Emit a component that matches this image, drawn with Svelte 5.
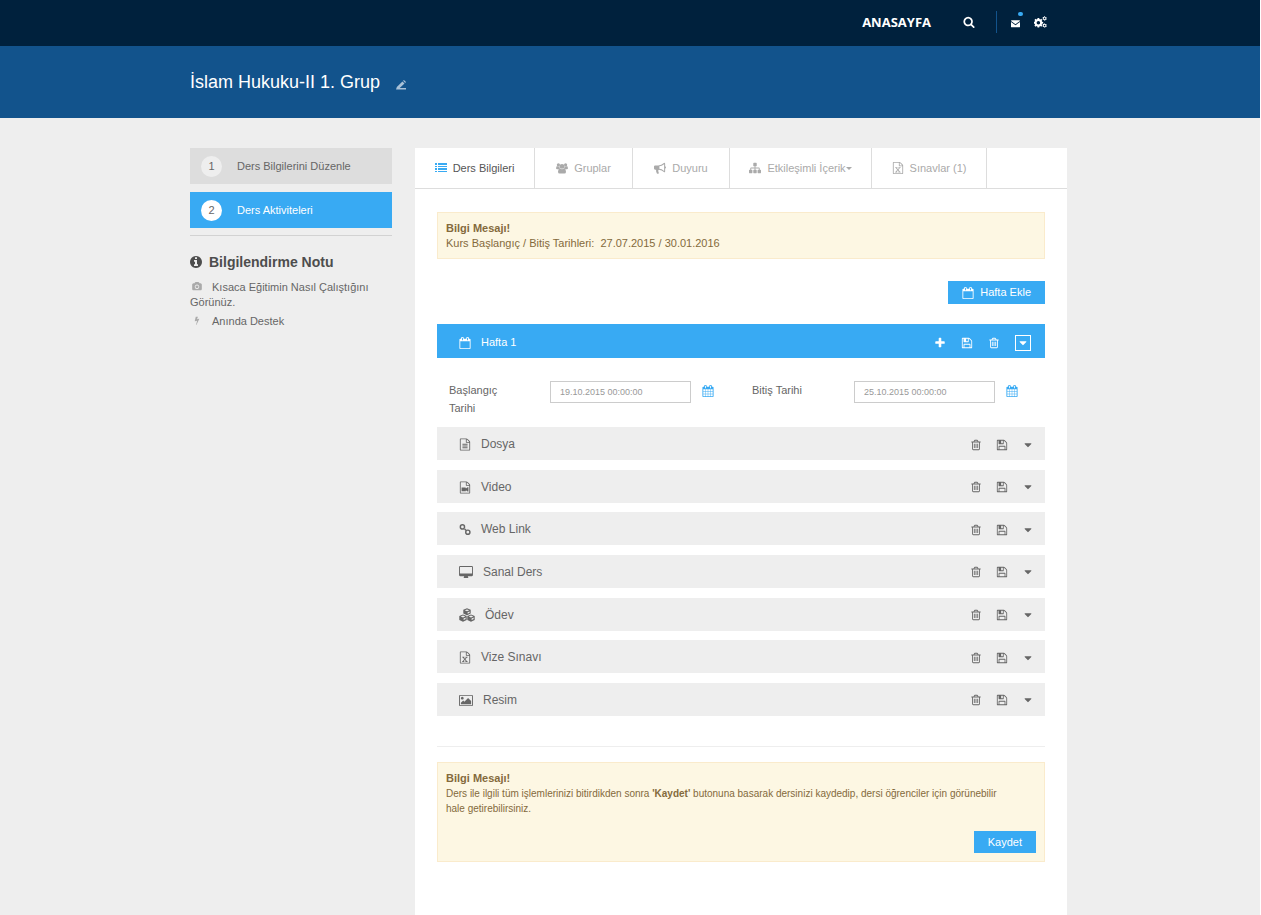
<script lang="ts">
    /* menu data */
    const tabs = [
        { icon: 'list', label: 'Ders Bilgileri' },
        { icon: 'users', label: 'Gruplar' },
        { icon: 'bullhorn', label: 'Duyuru' },
        { icon: 'sitemap', label: 'Etkileşimli İçerik', menu: true },
        { icon: 'excel', label: 'Sınavlar (1)' },
    ];

    const steps = ['Ders Bilgilerini Düzenle', 'Ders Aktiviteleri'];

    const activities = [
        { icon: 'text', label: 'Dosya', size: 12 },
        { icon: 'video', label: 'Video', size: 12 },
        { icon: 'link', label: 'Web Link', size: 12 },
        { icon: 'desktop', label: 'Sanal Ders', size: 14 },
        { icon: 'cubes', label: 'Ödev', size: 16 },
        { icon: 'excel', label: 'Vize Sınavı', size: 12 },
        { icon: 'image', label: 'Resim', size: 14 },
    ];

    /* icon shapes */
    const page = 'M1596 380q28 28 48 76t20 88v1152q0 40-28 68t-68 28h-1344q-40 0-68-28t-28-68v-1600q0-40 28-68t68-28h896q40 0 88 20t76 48zm-444-244v376h376q-10-29-22-41l-313-313q-12-12-41-22zm384 1528v-1024h-416q-40 0-68-28t-28-68v-416h-768v1536h1280z';
    const calendarFrame = 'M576 448v-288q0-13-9.5-22.5t-22.5-9.5h-64q-13 0-22.5 9.5t-9.5 22.5v288q0 13 9.5 22.5t22.5 9.5h64q13 0 22.5-9.5t9.5-22.5zm768 0v-288q0-13-9.5-22.5t-22.5-9.5h-64q-13 0-22.5 9.5t-9.5 22.5v288q0 13 9.5 22.5t22.5 9.5h64q13 0 22.5-9.5t9.5-22.5zm384-64v1280q0 52-38 90t-90 38h-1408q-52 0-90-38t-38-90v-1280q0-52 38-90t90-38h128v-96q0-66 47-113t113-47h64q66 0 113 47t47 113v96h384v-96q0-66 47-113t113-47h64q66 0 113 47t47 113v96h128q52 0 90 38t38 90z';

    const shapes: Record<string, { box?: string; d: string }> = {
        search: { d: 'M1216 832q0-185-131.5-316.5t-316.5-131.5-316.5 131.5-131.5 316.5 131.5 316.5 316.5 131.5 316.5-131.5 131.5-316.5zm512 832q0 52-38 90t-90 38q-54 0-90-38l-343-342q-179 124-399 124-143 0-273.5-55.5t-225-150-150-225-55.5-273.5 55.5-273.5 150-225 225-150 273.5-55.5 273.5 55.5 225 150 150 225 55.5 273.5q0 220-124 399l343 343q37 37 37 90z' },
        mail: { box: '0 0 14 14', d: 'M1 2h12q1 0 1 1L7 8 0 3q0-1 1-1zM0 4.800l7 4.800 7-4.800V12q0 1-1 1H1q-1 0-1-1z' },
        cogs: { box: '0 0 16 14', d: 'M4.400 2h2l.3 1.400 1 .4 1.200-.8 1.400 1.400-.8 1.200.4 1 1.400.3v2l-1.400.3-.4 1 .8 1.200L8.900 12.800l-1.200-.8-1 .4-.3 1.400h-2l-.3-1.400-1-.4-1.200.8L.5 11.400l.8-1.200-.4-1-1.400-.3v-2l1.400-.3.4-1-.8-1.200L1.900 3l1.200.8 1-.4zM5.400 5.700a2.200 2.200 0 1 0 0 4.400 2.200 2.200 0 0 0 0-4.400zM12.500 0h1l.4 1 1-.2.7.9-.6.8.7.7-.6 1-.9-.1-.5 1h-1.200l-.4-1-1 .1-.6-1 .6-.8-.6-.7.6-1 1 .1zM13 1.600a1 1 0 1 0 0 2 1 1 0 0 0 0-2zM12.500 8.800h1l.4 1 1-.2.7.9-.6.8.7.7-.6 1-.9-.1-.5 1h-1.200l-.4-1-1 .1-.6-1 .6-.8-.6-.7.6-1 1 .1zM13 10.400a1 1 0 1 0 0 2 1 1 0 0 0 0-2z' },
        pencil: { box: '0 0 12 12', d: 'M1 8.500 7.700 1.800 10.200 4.300 4.500 9.500H12V11.500H0zM8.500 1l1-1 2.500 2.500-1 1z' },
        info: { box: '128 128 1536 1536', d: 'M1152 1376v-160q0-14-9-23t-23-9h-96v-512q0-14-9-23t-23-9h-320q-14 0-23 9t-9 23v160q0 14 9 23t23 9h96v320h-96q-14 0-23 9t-9 23v160q0 14 9 23t23 9h448q14 0 23-9t9-23zm-128-896v-160q0-14-9-23t-23-9h-192q-14 0-23 9t-9 23v160q0 14 9 23t23 9h192q14 0 23-9t9-23zm640 416q0 209-103 385.5t-279.5 279.5-385.5 103-385.5-103-279.5-279.5-103-385.5 103-385.5 279.5-279.5 385.5-103 385.5 103 279.5 279.5 103 385.5z' },
        camera: { box: '-64 0 1920 1792', d: 'M896 672q119 0 203.5 84.5t84.5 203.5-84.5 203.5-203.5 84.5-203.5-84.5-84.5-203.5 84.5-203.5 203.5-84.5zm704-416q106 0 181 75t75 181v896q0 106-75 181t-181 75h-1408q-106 0-181-75t-75-181v-896q0-106 75-181t181-75h224l51-136q19-49 69.5-84.5t103.5-35.5h512q53 0 103.5 35.5t69.5 84.5l51 136h224zm-704 1152q185 0 316.5-131.5t131.5-316.5-131.5-316.5-316.5-131.5-316.5 131.5-131.5 316.5 131.5 316.5 316.5 131.5z' },
        bolt: { d: 'M1333 566q18 20 7 44l-540 1157q-13 25-42 25-4 0-14-2-17-5-25.5-19t-4.5-30l197-808-406 101q-4 1-12 1-18 0-31-11-18-15-13-39l201-825q4-14 16-23t28-9h328q19 0 32 12.5t13 29.5q0 8-5 18l-171 463 396-98q8-2 12-2 19 0 34 15z' },
        list: { box: '0 0 12 12', d: 'M0 1h2v2H0zM3 1h9v2H3zM0 4h2v1H0zM3 4h9v1H3zM0 6h2v2H0zM3 6h9v2H3zM0 9h2v1H0zM3 9h9v1H3z' },
        users: { box: '0 0 15 14', d: 'M3 1a2 2 0 1 1 0 4 2 2 0 0 1 0-4zM12 1a2 2 0 1 1 0 4 2 2 0 0 1 0-4zM7.500 2a3 3 0 1 1 0 6 3 3 0 0 1 0-6zM1 4.500l2 1 1.300-.5q0 1.600 1 2.500Q4 7.600 3.200 8.500H1.500Q0 8.500 0 7zM14 4.500l-2 1-1.300-.5q0 1.600-1 2.500 1.300.1 2.100 1h1.700Q15 8.500 15 7zM5 7.700q2.500 1.500 5 0 2.500.3 2.500 4Q12.500 14 10.500 14h-6q-2 0-2-2.300 0-3.700 2.500-4z' },
        bullhorn: { box: '0 0 14 14', d: 'M13 5q1 .3 1 1.300T13 7.600V11q0 1-1 1-3-2.700-6.200-3-1.300.6-.7 1.700-.4 1 .9 2.100-.8 1.200-2.600.6-1.200-2-1-4.400H1.300Q0 9 0 7.700V5.300Q0 4 1.300 4H5q3.400 0 7-3 1 0 1 1zm-1.200-2.500Q9 4.700 6.300 5v3Q9 8.200 11.800 10.500z' },
        sitemap: { d: 'M1792 1248v320q0 40-28 68t-68 28h-320q-40 0-68-28t-28-68v-320q0-40 28-68t68-28h96v-192h-512v192h96q40 0 68 28t28 68v320q0 40-28 68t-68 28h-320q-40 0-68-28t-28-68v-320q0-40 28-68t68-28h96v-192h-512v192h96q40 0 68 28t28 68v320q0 40-28 68t-68 28h-320q-40 0-68-28t-28-68v-320q0-40 28-68t68-28h96v-192q0-52 38-90t90-38h512v-192h-96q-40 0-68-28t-28-68v-320q0-40 28-68t68-28h320q40 0 68 28t28 68v320q0 40-28 68t-68 28h-96v192h512q52 0 90 38t38 90v192h96q40 0 68 28t28 68z' },
        text: { d: page + 'M512 800h768v128h-768zM512 1056h768v128h-768zM512 1312h768v128h-768z' },
        video: { d: page + 'M384 896h576q64 0 64 64v96l256-192h128v640h-128l-256-192v96q0 64-64 64h-576z' },
        excel: { d: page + 'M480 768h330v110h-70l145 200 145-200h-70v-110h330v110h-100l-220 280 230 290h90v110h-350v-110h80l-150-200-150 200h80v110h-340v-110h90l230-290-220-280h-80z' },
        link: { box: '0 0 14 14', d: 'M4 .7a3.300 3.300 0 1 1 0 6.600 3.300 3.300 0 0 1 0-6.600zM4 2.400a1.600 1.600 0 1 0 0 3.200 1.600 1.600 0 0 0 0-3.200zM10.300 6.900a3.300 3.300 0 1 1 0 6.600 3.300 3.300 0 0 1 0-6.600zM10.300 8.600a1.600 1.600 0 1 0 0 3.200 1.600 1.600 0 0 0 0-3.200zM6.900 5.500 8.700 7.300 7.400 8.600 5.600 6.800z' },
        desktop: { box: '-64 0 1920 1792', d: 'M1728 992v-832q0-13-9.5-22.5t-22.5-9.5h-1600q-13 0-22.5 9.5t-9.5 22.5v832q0 13 9.5 22.5t22.5 9.5h1600q13 0 22.5-9.5t9.5-22.5zm128-832v1088q0 66-47 113t-113 47h-544q0 37 16 77.5t32 71 16 43.5q0 26-19 45t-45 19h-512q-26 0-45-19t-19-45q0-14 16-44t32-70 16-78h-544q-66 0-113-47t-47-113v-1088q0-66 47-113t113-47h1600q66 0 113 47t47 113z' },
        cubes: { box: '0 0 16 14', d: 'M8 .3l3.700 1.500v3.700L8 7.200 4.300 5.500V1.800zM8 1.400 5.700 2.300 8 3.300l2.300-1zM8.600 4.300v1.500l2-1V3.400zM4 6.500l3.700 1.500v3.900L4 13.700.3 11.900V8zM4 7.600 1.700 8.500 4 9.500l2.300-1zM4.600 10.500V12l2-1V9.600zM12 6.500l3.700 1.500v3.900L12 13.700l-3.700-1.800V8zM12 7.600l-2.300.9 2.300 1 2.300-1zM12.600 10.500V12l2-1V9.600z' },
        image: { box: '-64 0 1920 1792', d: 'M576 576q0 80-56 136t-136 56-136-56-56-136 56-136 136-56 136 56 56 136zm1024 384v448h-1408v-192l320-320 160 160 512-512zm96-704h-1600q-13 0-22.5 9.5t-9.5 22.5v1216q0 13 9.5 22.5t22.5 9.5h1600q13 0 22.5-9.5t9.5-22.5v-1216q0-13-9.5-22.5t-22.5-9.5zm160 32v1216q0 66-47 113t-113 47h-1600q-66 0-113-47t-47-113v-1216q0-66 47-113t113-47h1600q66 0 113 47t47 113z' },
        plus: { d: 'M1600 736v192q0 40-28 68t-68 28h-416v416q0 40-28 68t-68 28h-192q-40 0-68-28t-28-68v-416h-416q-40 0-68-28t-28-68v-192q0-40 28-68t68-28h416v-416q0-40 28-68t68-28h192q40 0 68 28t28 68v416h416q40 0 68 28t28 68z' },
        save: { d: 'M512 1536h768v-384h-768v384zm896 0h128v-896q0-14-10-38.5t-20-34.5l-281-281q-10-10-34-20t-39-10v416q0 40-28 68t-68 28h-576q-40 0-68-28t-28-68v-416h-128v1280h128v-416q0-40 28-68t68-28h832q40 0 68 28t28 68v416zm-384-928v-320q0-13-9.5-22.5t-22.5-9.5h-192q-13 0-22.5 9.5t-9.5 22.5v320q0 13 9.5 22.5t22.5 9.5h192q13 0 22.5-9.5t9.5-22.5zm640 32v928q0 40-28 68t-68 28h-1344q-40 0-68-28t-28-68v-1344q0-40 28-68t68-28h928q40 0 88 20t76 48l280 280q28 28 48 76t20 88z' },
        trash: { d: 'M704 736v576q0 14-9 23t-23 9h-64q-14 0-23-9t-9-23v-576q0-14 9-23t23-9h64q14 0 23 9t9 23zm256 0v576q0 14-9 23t-23 9h-64q-14 0-23-9t-9-23v-576q0-14 9-23t23-9h64q14 0 23 9t9 23zm256 0v576q0 14-9 23t-23 9h-64q-14 0-23-9t-9-23v-576q0-14 9-23t23-9h64q14 0 23 9t9 23zm128 724v-948h-896v948q0 22 7 40.5t14.5 27 10.5 8.5h832q3 0 10.5-8.5t14.5-27 7-40.5zm-672-1076h448l-48-117q-7-9-17-11h-317q-10 2-17 11zm928 32v64q0 14-9 23t-23 9h-96v948q0 83-47 143.5t-113 60.5h-832q-66 0-113-58.5t-47-141.5v-952h-96q-14 0-23-9t-9-23v-64q0-14 9-23t23-9h309l70-167q15-37 54-63t79-26h320q40 0 79 26t54 63l70 167h309q14 0 23 9t9 23z' },
        caret: { d: 'M1408 704q0 26-19 45l-448 448q-19 19-45 19t-45-19l-448-448q-19-19-19-45t19-45 45-19h896q26 0 45 19t19 45z' },
        calendarO: { d: calendarFrame + 'M192 1664h1408v-1024h-1408v1024z' },
        calendar: { d: calendarFrame + 'M192 1664h288v-288h-288zM544 1664h320v-288h-320zM928 1664h320v-288h-320zM1312 1664h288v-288h-288zM192 1312h288v-320h-288zM544 1312h320v-320h-320zM928 1312h320v-320h-320zM1312 1312h288v-320h-288zM192 928h288v-288h-288zM544 928h320v-288h-320zM928 928h320v-288h-320zM1312 928h288v-288h-288z' },
    };

    let activeTab = $state(0);
    let activeStep = $state(1);
    let weekOpen = $state(true);
    let startDate = $state('19.10.2015 00:00:00');
    let endDate = $state('25.10.2015 00:00:00');
</script>

{#snippet icon(name: string, width = 12, height = 12)}
    <svg {width} {height} viewBox={shapes[name].box ?? '0 0 1792 1792'} aria-hidden="true">
        <path fill="currentColor" fill-rule="evenodd" d={shapes[name].d} />
    </svg>
{/snippet}

<div class="page">
    <header>
        <div class="topbar">
            <nav class="container">
                <a class="home" href="#anasayfa">ANASAYFA</a>
                <button class="search" aria-label="Ara">{@render icon('search', 12, 12)}</button>
                <span class="tools">
                    <button class="mail" aria-label="Mesajlar">{@render icon('mail', 9, 9)}</button>
                    <button aria-label="Ayarlar">{@render icon('cogs', 13, 12)}</button>
                </span>
            </nav>
        </div>
        <div class="titlebar">
            <div class="container">
                <h1>İslam Hukuku-II 1. Grup</h1>
                <button class="edit" aria-label="Başlığı düzenle">{@render icon('pencil', 10, 10)}</button>
            </div>
        </div>
    </header>

    <div class="container columns">
        <aside>
            <ol class="steps">
                {#each steps as step, i}
                    <li>
                        <button class="step" class:active={activeStep === i} onclick={() => (activeStep = i)}>
                            <span class="number">{i + 1}</span>{step}
                        </button>
                    </li>
                {/each}
            </ol>
            <h2>{@render icon('info')} Bilgilendirme Notu</h2>
            <a class="note" href="#egitim"><span class="note-icon">{@render icon('camera', 10, 9)}</span>Kısaca Eğitimin Nasıl Çalıştığını Görünüz.</a>
            <a class="note" href="#destek"><span class="note-icon">{@render icon('bolt', 10, 9)}</span>Anında Destek</a>
        </aside>

        <main>
            <div class="tabs">
                {#each tabs as tab, i}
                    <button class="tab" class:active={activeTab === i} onclick={() => (activeTab = i)}>
                        {@render icon(tab.icon)}
                        <span>{tab.label}{#if tab.menu}<i class="arrow"></i>{/if}</span>
                    </button>
                {/each}
            </div>

            <div class="content">
                <div class="alert">
                    <strong>Bilgi Mesajı!</strong>
                    <p>Kurs Başlangıç / Bitiş Tarihleri: <span class="dates">27.07.2015 / 30.01.2016</span></p>
                </div>

                <button class="primary add">{@render icon('calendarO')} Hafta Ekle</button>

                <section>
                    <div class="week">
                        {@render icon('calendarO')}
                        <h3>Hafta 1</h3>
                        <div class="actions">
                            <button aria-label="Ekle">{@render icon('plus')}</button>
                            <button aria-label="Kaydet">{@render icon('save')}</button>
                            <button aria-label="Sil">{@render icon('trash')}</button>
                            <button class="toggle" aria-label="Aç / Kapat" onclick={() => (weekOpen = !weekOpen)}>{@render icon('caret')}</button>
                        </div>
                    </div>

                    {#if weekOpen}
                        <div class="range">
                            <label for="start">Başlangıç Tarihi</label>
                            <input id="start" type="text" bind:value={startDate} />
                            <button aria-label="Başlangıç tarihini seç">{@render icon('calendar')}</button>
                            <label for="end">Bitiş Tarihi</label>
                            <input id="end" type="text" bind:value={endDate} />
                            <button aria-label="Bitiş tarihini seç">{@render icon('calendar')}</button>
                        </div>

                        <ul class="activities">
                            {#each activities as item}
                                <li>
                                    {@render icon(item.icon, item.size, item.icon === 'cubes' ? 14 : 13)}
                                    <span>{item.label}</span>
                                    <div class="actions">
                                        <button aria-label="{item.label} sil">{@render icon('trash')}</button>
                                        <button aria-label="{item.label} kaydet">{@render icon('save')}</button>
                                        <button aria-label="{item.label} aç">{@render icon('caret')}</button>
                                    </div>
                                </li>
                            {/each}
                        </ul>
                    {/if}
                </section>

                <hr />

                <div class="alert">
                    <strong>Bilgi Mesajı!</strong>
                    <p class="hint">Ders ile ilgili tüm işlemlerinizi bitirdikden sonra <b>'Kaydet'</b> butonuna basarak dersinizi kaydedip, dersi öğrenciler için görünebilir hale getirebilirsiniz.</p>
                    <button class="primary save">Kaydet</button>
                </div>
            </div>
        </main>
    </div>
</div>

<style>
    :global(body) {
        background: #fff;
    }

    .page {
        min-height: 100vh;
        margin-right: 1px;
        display: flex;
        flex-direction: column;
        background: #eee;
        color: #666;
        font-family: "Liberation Sans", Arial, sans-serif;
        font-size: 11px;
        line-height: 15px;
    }

    .page * {
        box-sizing: border-box;
    }

    h1, h2, h3, p, ol, ul {
        margin: 0;
        padding: 0;
    }

    ol, ul {
        list-style: none;
    }

    svg {
        display: block;
        flex: none;
    }

    a {
        color: inherit;
        text-decoration: none;
    }

    button {
        display: flex;
        align-items: center;
        padding: 0;
        border: 0;
        background: none;
        color: inherit;
        font: inherit;
        cursor: pointer;
    }

    .container {
        width: 100%;
        max-width: 880px;
        margin: 0 auto;
        padding-right: 3px;
    }

    /* header */
    .topbar {
        background: #00213d;
        color: #fff;
    }

    .topbar nav {
        display: flex;
        align-items: center;
        justify-content: flex-end;
        height: 46px;
        padding: 0 23px 3px 0;
    }

    .home {
        font: bold 13px/20px "Open Sans", sans-serif;
    }

    .search {
        margin: 0 21px 0 32px;
    }

    .tools {
        display: flex;
        align-items: center;
        gap: 14px;
        height: 22px;
        padding-left: 14px;
        border-left: 1px solid #12538c;
    }

    .mail {
        position: relative;
        padding-top: 4px;
    }

    .mail::after {
        content: "";
        position: absolute;
        top: -3px;
        right: -3px;
        width: 5px;
        height: 4px;
        border-radius: 2px;
        background: #38aaf3;
    }

    .titlebar {
        background: #12538c;
        color: #fff;
    }

    .titlebar .container {
        display: flex;
        align-items: center;
        gap: 16px;
        height: 72px;
    }

    h1 {
        font-size: 18px;
        font-weight: normal;
        line-height: 24px;
    }

    .edit {
        padding-top: 6px;
        color: #a9c1d7;
    }

    /* sidebar */
    .columns {
        flex: 1;
        display: grid;
        grid-template-columns: 202px minmax(0, 1fr);
        gap: 23px;
        padding-top: 30px;
    }

    .steps {
        display: grid;
        gap: 8px;
        padding-bottom: 7px;
        border-bottom: 1px solid #d2d2d2;
    }

    .step {
        gap: 15px;
        width: 100%;
        height: 36px;
        padding-left: 11px;
        background: #ddd;
    }

    .step.active {
        background: #38aaf3;
        color: #fff;
    }

    .number {
        width: 21px;
        height: 21px;
        border-radius: 50%;
        background: #eee;
        color: #666;
        line-height: 21px;
    }

    .active .number {
        background: #fff;
    }

    h2 {
        display: flex;
        align-items: center;
        gap: 7px;
        margin: 16px 0 8px;
        color: #4d4d4d;
        font-size: 14px;
        line-height: 20px;
    }

    .note {
        display: block;
        margin-bottom: 4px;
    }

    .note-icon {
        display: inline-block;
        width: 22px;
        padding-left: 2px;
        color: #aaa;
    }

    /* tabs */
    main {
        background: #fff;
    }

    .tabs {
        display: grid;
        grid-template-columns: 120px 98px 97px 142px 115px;
        border-bottom: 1px solid #ddd;
    }

    .tab {
        justify-content: center;
        gap: 6px;
        height: 40px;
        border-right: 1px solid #ddd;
        color: #aaa;
        white-space: nowrap;
    }

    .tab.active {
        color: #555;
    }

    .tab.active svg {
        color: #38aaf3;
    }

    .arrow {
        display: inline-block;
        border: 3px solid transparent;
        border-top-color: currentColor;
        border-bottom: 0;
        vertical-align: middle;
    }

    .content {
        display: flex;
        flex-direction: column;
        padding: 23px 22px 53px;
    }

    .alert {
        padding: 8px 8px 7px;
        border: 1px solid #faebcc;
        background: #fdf7e3;
        color: #846a3c;
    }

    .alert strong {
        display: block;
    }

    .dates {
        margin-left: 3px;
    }

    .hint {
        padding-right: 28px;
        font-size: 10px;
    }

    .primary {
        height: 22px;
        background: #38aaf3;
        color: #fff;
    }

    .add {
        gap: 6px;
        align-self: flex-end;
        height: 23px;
        margin: 22px 0 20px;
        padding: 0 14px;
    }

    .save {
        margin: 15px 0 1px auto;
        padding: 0 14px;
    }

    /* week */
    .week {
        display: flex;
        align-items: center;
        gap: 10px;
        height: 34px;
        padding: 3px 14px 0 22px;
        background: #38aaf3;
        color: #fff;
    }

    h3 {
        font-size: 11px;
        font-weight: normal;
    }

    .actions {
        display: flex;
        align-items: center;
        gap: 15px;
        margin-left: auto;
    }

    .toggle {
        justify-content: center;
        width: 16px;
        height: 16px;
        border: 1px solid #fff;
    }

    .range {
        display: grid;
        grid-template-columns: 101px 141px 61px 102px 141px auto;
        align-items: start;
        height: 69px;
        padding: 23px 12px 0;
    }

    .range label {
        max-width: 70px;
        line-height: 18px;
    }

    .range input {
        width: 100%;
        height: 22px;
        padding: 0 9px;
        border: 1px solid #ccc;
        border-radius: 0;
        color: #999;
        font: 9px "Liberation Sans", Arial, sans-serif;
    }

    .range button {
        padding: 4px 0 0 11px;
        color: #38aaf3;
    }

    .activities {
        display: flex;
        flex-direction: column;
        justify-content: space-between;
        min-height: 289px;
    }

    .activities li {
        display: flex;
        align-items: center;
        gap: 10px;
        height: 33px;
        padding: 2px 11px 0 22px;
        background: #eee;
        font-size: 12px;
    }

    .activities .actions {
        gap: 14px;
    }

    hr {
        width: 100%;
        margin: 30px 0 15px;
        border: 0;
        border-top: 1px solid #eee;
    }
</style>
